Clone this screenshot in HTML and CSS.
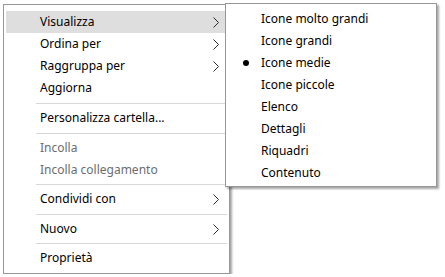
FILE: index.html
```html
<!DOCTYPE html>
<html lang="it">
<head>
    <meta charset="UTF-8">
    <title>Menu contestuale</title>
    <link rel="stylesheet" href="styles.css">
</head>
<body>

    <div class="desktop">
        <!-- Main context menu -->
        <ul class="menu">
            <li class="item active">Visualizza<svg class="arrow" width="6" height="11" viewBox="0 0 6 11"><path d="M0.5 0.5 L5.5 5.5 L0.5 10.5"/></svg></li>
            <li class="item">Ordina per<svg class="arrow" width="6" height="11" viewBox="0 0 6 11"><path d="M0.5 0.5 L5.5 5.5 L0.5 10.5"/></svg></li>
            <li class="item">Raggruppa per<svg class="arrow" width="6" height="11" viewBox="0 0 6 11"><path d="M0.5 0.5 L5.5 5.5 L0.5 10.5"/></svg></li>
            <li class="item">Aggiorna</li>
            <li class="sep"></li>
            <li class="item">Personalizza cartella...</li>
            <li class="sep"></li>
            <li class="item disabled">Incolla</li>
            <li class="item disabled">Incolla collegamento</li>
            <li class="sep"></li>
            <li class="item">Condividi con<svg class="arrow" width="6" height="11" viewBox="0 0 6 11"><path d="M0.5 0.5 L5.5 5.5 L0.5 10.5"/></svg></li>
            <li class="sep"></li>
            <li class="item">Nuovo<svg class="arrow" width="6" height="11" viewBox="0 0 6 11"><path d="M0.5 0.5 L5.5 5.5 L0.5 10.5"/></svg></li>
            <li class="sep"></li>
            <li class="item">Proprietà</li>
        </ul>

        <!-- Submenu of "Visualizza" -->
        <ul class="menu submenu">
            <li class="item">Icone molto grandi</li>
            <li class="item">Icone grandi</li>
            <li class="item checked">Icone medie</li>
            <li class="item">Icone piccole</li>
            <li class="item">Elenco</li>
            <li class="item">Dettagli</li>
            <li class="item">Riquadri</li>
            <li class="item">Contenuto</li>
        </ul>
    </div>

</body>
</html>
```

FILE: styles.css
```css
body {
    margin: 0;
    background-color: #ffffff;
    font-family: "Noto Sans", "Open Sans", sans-serif;
    font-size: 12px;
    color: #000000;
}

.desktop {
    position: relative;
    padding: 4px 0 0 3px;
}

.menu {
    list-style: none;
    margin: 0;
    width: 227px;
    box-sizing: border-box;
    padding: 6px 2px 4px 2px;
    background-color: #ffffff;
    border: 1px solid #979797;
    box-shadow: 2px 2px 2px rgba(0, 0, 0, 0.35);
}

.item {
    position: relative;
    height: 22px;
    line-height: 22px;
    padding-left: 34px;
    white-space: nowrap;
}

.item.active {
    background-color: #dedede;
}

.item.disabled {
    color: #6d6d6d;
}

.arrow {
    position: absolute;
    right: 8px;
    top: 6px;
}

.arrow path {
    fill: none;
    stroke: #2b2b2b;
    stroke-width: 1;
}

.sep {
    height: 1px;
    margin: 4px 0 3px 30px;
    background-color: #d7d7d7;
}

.sep + .item + .item + .sep,
.sep + .item + .sep + .item + .sep {
    margin-top: 3px;
}

/* Submenu floats over the main menu */
.submenu {
    position: absolute;
    top: 3px;
    left: 225px;
    width: 212px;
    padding: 4px 2px 2px 2px;
}

.submenu .item {
    padding-left: 33px;
}

.checked::before {
    content: "";
    position: absolute;
    left: 15px;
    top: 8px;
    width: 6px;
    height: 6px;
    border-radius: 50%;
    background-color: #000000;
}
```
